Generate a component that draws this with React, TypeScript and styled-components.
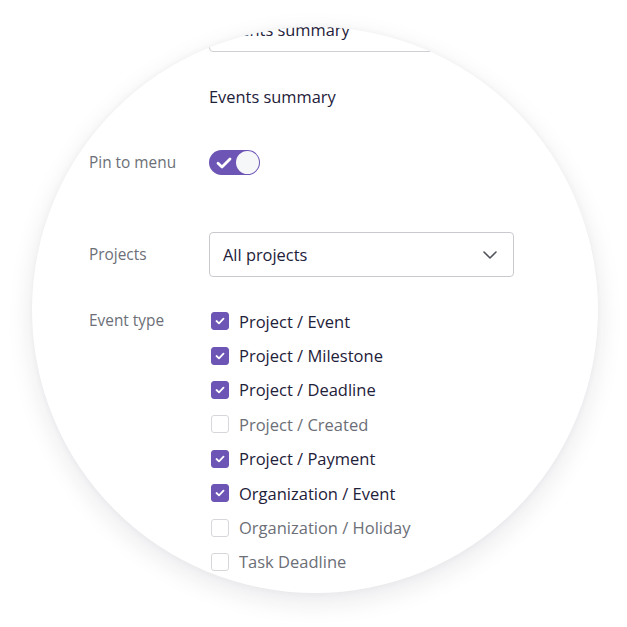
import * as React from "react";
import styled, { createGlobalStyle } from "styled-components";

const PURPLE = "#6c55b4";

const GlobalStyle = createGlobalStyle`
  html, body {
    margin: 0;
    padding: 0;
    background: #ffffff;
    font-family: "Open Sans", "Noto Sans", sans-serif;
  }
`;

const eventTypes = [
  { label: "Project / Event", checked: true },
  { label: "Project / Milestone", checked: true },
  { label: "Project / Deadline", checked: true },
  { label: "Project / Created", checked: false },
  { label: "Project / Payment", checked: true },
  { label: "Organization / Event", checked: true },
  { label: "Organization / Holiday", checked: false },
  { label: "Task Deadline", checked: false },
];

export default function App() {
  return (
    <>
      <GlobalStyle />
      <Page>
        <Lens>
          <Form>
            <Row>
              <Label />
              <TextInput>Events summary</TextInput>
            </Row>
            <Row $gap={33}>
              <Label />
              <Title>Events summary</Title>
            </Row>
            <Row $gap={41} $center>
              <Label>Pin to menu</Label>
              <Toggle>
                <svg width="16" height="12" viewBox="0 0 16 12">
                  <path
                    d="M2 6.2 L6 10 L14 2"
                    fill="none"
                    stroke="#fff"
                    strokeWidth="2.8"
                    strokeLinecap="round"
                    strokeLinejoin="round"
                  />
                </svg>
                <Knob />
              </Toggle>
            </Row>
            <Row $gap={57} $center>
              <Label>Projects</Label>
              <Select>
                All projects
                <svg width="16" height="10" viewBox="0 0 16 10">
                  <path
                    d="M2 2 L8 8 L14 2"
                    fill="none"
                    stroke="#50535c"
                    strokeWidth="1.6"
                    strokeLinecap="round"
                    strokeLinejoin="round"
                  />
                </svg>
              </Select>
            </Row>
            <Row $gap={27}>
              <Label $tall>Event type</Label>
              <List>
                {eventTypes.map((t) => (
                  <Item key={t.label} $checked={t.checked}>
                    <Box $checked={t.checked}>
                      {t.checked && (
                        <svg width="10" height="8" viewBox="0 0 10 8">
                          <path
                            d="M1.5 4 L4 6.3 L8.5 1.7"
                            fill="none"
                            stroke="#fff"
                            strokeWidth="1.8"
                            strokeLinecap="round"
                            strokeLinejoin="round"
                          />
                        </svg>
                      )}
                    </Box>
                    {t.label}
                  </Item>
                ))}
              </List>
            </Row>
          </Form>
        </Lens>
      </Page>
    </>
  );
}

const Page = styled.div`
  width: 627px;
  height: 627px;
  padding: 27px 0 0 32px;
  box-sizing: border-box;
  overflow: hidden;
`;

const Lens = styled.div`
  width: 566px;
  height: 566px;
  border-radius: 50%;
  overflow: hidden;
  background: #fff;
  box-shadow: 0 8px 26px rgba(30, 30, 60, 0.1), 0 0 6px rgba(30, 30, 60, 0.04);
`;

const Form = styled.div`
  margin-top: -20px;
  padding-left: 57px;
  display: flex;
  flex-direction: column;
`;

type RowProps = { $gap?: number; $center?: boolean };

const Row = styled.div<RowProps>`
  display: grid;
  grid-template-columns: 120px 305px;
  align-items: ${({ $center }) => ($center ? "center" : "start")};
  margin-top: ${({ $gap }) => $gap || 0}px;
`;

const Label = styled.div<{ $tall?: boolean }>`
  font-size: 15.4px;
  color: #6c6f77;
  line-height: ${({ $tall }) => ($tall ? "34.4px" : "20px")};
`;

const TextInput = styled.div`
  height: 45px;
  box-sizing: border-box;
  border: 1px solid #cfd0d4;
  border-radius: 4px;
  padding: 0 13px;
  display: flex;
  align-items: center;
  font-size: 16.4px;
  color: #1e2139;
`;

const Title = styled.div`
  font-size: 16.4px;
  line-height: 24px;
  color: #1e2139;
`;

const Toggle = styled.div`
  width: 51px;
  height: 25px;
  box-sizing: border-box;
  border-radius: 13px;
  background: ${PURPLE};
  display: flex;
  align-items: center;
  justify-content: space-between;
  padding: 0 1px 0 7px;

  svg {
    margin-top: 1px;
  }
`;

const Knob = styled.div`
  width: 23px;
  height: 23px;
  border-radius: 50%;
  background: #f6f7f8;
`;

const Select = styled.div`
  height: 45px;
  box-sizing: border-box;
  border: 1px solid #c9cacf;
  border-radius: 4px;
  padding: 0 15px 0 13px;
  display: flex;
  align-items: center;
  justify-content: space-between;
  font-size: 16.4px;
  color: #1e2139;
`;

const List = styled.div`
  display: flex;
  flex-direction: column;
`;

const Item = styled.div<{ $checked: boolean }>`
  height: 34.4px;
  display: flex;
  align-items: center;
  gap: 10px;
  font-size: 16.5px;
  color: ${({ $checked }) => ($checked ? "#1e2139" : "#6c6f77")};
`;

const Box = styled.div<{ $checked: boolean }>`
  width: 18px;
  height: 18px;
  margin-left: 2px;
  box-sizing: border-box;
  border-radius: 3px;
  display: flex;
  align-items: center;
  justify-content: center;
  background: ${({ $checked }) => ($checked ? PURPLE : "#fff")};
  border: 1px solid ${({ $checked }) => ($checked ? PURPLE : "#d6d7da")};
`;
